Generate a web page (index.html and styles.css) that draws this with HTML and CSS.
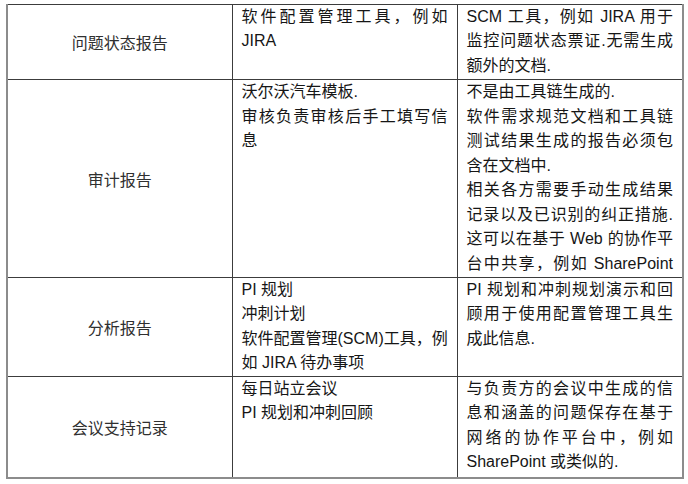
FILE: index.html
```html
<!DOCTYPE html>
<html lang="zh-CN">
<head>
<meta charset="utf-8">
<title>报告</title>
<link rel="stylesheet" href="styles.css">
</head>
<body>
<table class="report">
  <colgroup>
    <col class="c1"><col class="c2"><col class="c3">
  </colgroup>
  <tbody>
    <tr class="r1">
      <td class="name">问题状态报告</td>
      <td class="text">
        <div class="ln full">软件配置管理工具，例如</div>
        <div class="ln">JIRA</div>
      </td>
      <td class="text">
        <div class="ln full">SCM 工具，例如 JIRA 用于</div>
        <div class="ln full">监控问题状态票证.无需生成</div>
        <div class="ln">额外的文档.</div>
      </td>
    </tr>
    <tr class="r2">
      <td class="name">审计报告</td>
      <td class="text">
        <div class="ln">沃尔沃汽车模板.</div>
        <div class="ln full">审核负责审核后手工填写信</div>
        <div class="ln">息</div>
      </td>
      <td class="text">
        <div class="ln">不是由工具链生成的.</div>
        <div class="ln full">软件需求规范文档和工具链</div>
        <div class="ln full">测试结果生成的报告必须包</div>
        <div class="ln">含在文档中.</div>
        <div class="ln full">相关各方需要手动生成结果</div>
        <div class="ln full">记录以及已识别的纠正措施.</div>
        <div class="ln full">这可以在基于 Web 的协作平</div>
        <div class="ln full">台中共享，例如 SharePoint</div>
      </td>
    </tr>
    <tr class="r3">
      <td class="name">分析报告</td>
      <td class="text">
        <div class="ln">PI 规划</div>
        <div class="ln">冲刺计划</div>
        <div class="ln full">软件配置管理(SCM)工具，例</div>
        <div class="ln">如 JIRA 待办事项</div>
      </td>
      <td class="text">
        <div class="ln full">PI 规划和冲刺规划演示和回</div>
        <div class="ln full">顾用于使用配置管理工具生</div>
        <div class="ln">成此信息.</div>
      </td>
    </tr>
    <tr class="r4">
      <td class="name">会议支持记录</td>
      <td class="text">
        <div class="ln">每日站立会议</div>
        <div class="ln">PI 规划和冲刺回顾</div>
      </td>
      <td class="text">
        <div class="ln full">与负责方的会议中生成的信</div>
        <div class="ln full">息和涵盖的问题保存在基于</div>
        <div class="ln full">网络的协作平台中，例如</div>
        <div class="ln">SharePoint 或类似的.</div>
      </td>
    </tr>
  </tbody>
</table>
</body>
</html>
```

FILE: styles.css
```css
html, body {
  margin: 0;
  padding: 0;
  background: #ffffff;
}

body {
  font-family: "Liberation Sans", "Noto Sans CJK SC", sans-serif;
  font-size: 16px;
  color: #161616;
}

.report {
  margin: 4px 0 0 6px;
  width: 676px;
  table-layout: fixed;
  border-collapse: collapse;
  border-top: 1px solid #1e1e1e;
  border-left: 2px solid #8c8c8c;
  border-right: 2px solid #8c8c8c;
  border-bottom: 2px solid #8c8c8c;
}

.c1 { width: 225px; }
.c2 { width: 225px; }
.c3 { width: 226px; }

.report td {
  border: 1px solid #3c3c3c;
  padding: 0;
}

.report .name {
  text-align: center;
  vertical-align: middle;
  color: #303030;
}

.report .text {
  vertical-align: top;
  padding: 0 9px 0 9px;
}

.ln {
  line-height: 24.3px;
  white-space: nowrap;
}

.full {
  text-align: justify;
  text-align-last: justify;
}

.r1 td { height: 74px; }
.r2 td { height: 197px; }
.r3 td { height: 98px; }
.r4 td { height: 100px; }

.r2 .ln { line-height: 24.5px; }
```
